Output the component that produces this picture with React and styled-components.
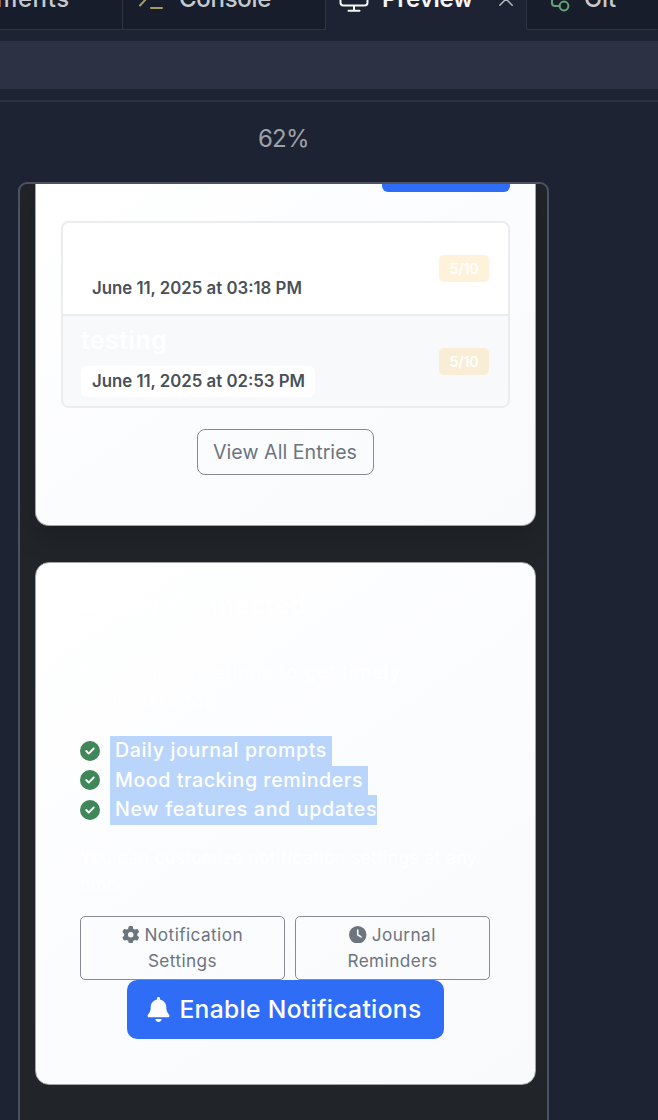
import React from "react";
import styled, { createGlobalStyle } from "styled-components";
import { FaBell, FaCircleCheck, FaClock, FaGear } from "react-icons/fa6";

const GlobalStyle = createGlobalStyle`
  * { box-sizing: border-box; }
  body {
    margin: 0;
    background: #1e2333;
    font-family: Inter, "Liberation Sans", sans-serif;
    -webkit-font-smoothing: antialiased;
  }
`;

const Page = styled.div`
  height: 1120px;
  overflow: hidden;
  display: flex;
  flex-direction: column;
`;

/* Editor chrome */
const TabBar = styled.div`
  flex: none;
  height: 62px;
  margin-top: -32px;
  display: flex;
`;

const Tab = styled.div`
  flex: none;
  width: ${(p) => p.$width};
  display: flex;
  align-items: center;
  padding-left: ${(p) => p.$inset}px;
  color: ${(p) => (p.$active ? "#f4f6f8" : "#c5cad0")};
  background: ${(p) => (p.$active ? "transparent" : "#181d2b")};
  border-bottom: 1px solid ${(p) => (p.$active ? "transparent" : "#2f3445")};
  border-right: 1px solid ${(p) => (p.$last ? "transparent" : "#2f3445")};
`;

const TabLabel = styled.span`
  font-size: 24px;
  line-height: 30px;
  font-weight: ${(p) => (p.$strong ? 600 : 500)};
  letter-spacing: ${(p) => p.$tracking}px;
  margin-left: ${(p) => p.$gap || 0}px;
  margin-top: 1px;
  white-space: nowrap;
`;

const TabIcon = styled.svg`
  flex: none;
  fill: none;
  stroke: ${(p) => p.$color};
  stroke-width: ${(p) => p.$weight || 2};
  stroke-linecap: round;
  stroke-linejoin: round;
  margin-left: ${(p) => p.$gap || 0}px;
`;

const AddressBar = styled.div`
  flex: none;
  height: 48px;
  margin: 11px 0;
  background: #2c3144;
`;

const ZoomRow = styled.div`
  flex: none;
  height: 82px;
  border-top: 2px solid #2c3142;
  padding: 22px 0 0 258px;
  font-size: 24px;
  line-height: 30px;
  letter-spacing: -0.8px;
  color: #9da1a8;
`;

/* Device frame */
const Device = styled.div`
  flex: none;
  width: 531px;
  height: 960px;
  margin-left: 18px;
  padding: 0 11px 0 15px;
  border: 2px solid #4c5164;
  border-radius: 9px;
  background: #212529;
  overflow: hidden;
`;

const Card = styled.section`
  display: flex;
  flex-direction: column;
  border: 1px solid #a2a4a7;
  border-radius: 14px;
  background: linear-gradient(145deg, #ffffff 0%, #fbfcfe 50%, #f9fafc 100%);
  color: #ffffff;
`;

const EntriesCard = styled(Card)`
  height: 342px;
  padding: 0 25px;
  border-top: 0;
  border-radius: 0 0 14px 14px;
  box-shadow: 0 10px 28px rgba(0, 0, 0, 0.2);
`;

const NotificationsCard = styled(Card)`
  height: 523px;
  margin-top: 36px;
  padding: 27px 45px 0 44px;
`;

const HeaderButton = styled.div`
  align-self: flex-end;
  width: 128px;
  height: 8px;
  border-radius: 0 0 6px 6px;
  background: #306df6;
`;

const EntryList = styled.div`
  margin: 29px 0 21px;
  border: 2px solid #eaecee;
  border-radius: 8px;
  overflow: hidden;
`;

const Entry = styled.article`
  display: flex;
  align-items: center;
  justify-content: space-between;
  height: ${(p) => (p.$shaded ? 92 : 91)}px;
  padding: 0 19px 0 18px;
  background: ${(p) => (p.$shaded ? "#f8f9fb" : "#ffffff")};

  & + & {
    border-top: 2px solid #eaecee;
  }
`;

const EntryBody = styled.div`
  display: flex;
  flex-direction: column;
  align-items: flex-start;
  gap: 10px;
`;

const EntryTitle = styled.h3`
  margin: 0;
  height: 30px;
  font-size: 24.6px;
  line-height: 29px;
  font-weight: 600;
  letter-spacing: 0.6px;
`;

const EntryDate = styled.time`
  padding: 0 10px 0 11px;
  border-radius: 6px;
  background: #ffffff;
  color: #495057;
  font-size: 16.8px;
  line-height: 31px;
  font-weight: 600;
`;

const Score = styled.span`
  width: 50px;
  border-radius: 5px;
  background: ${(p) => (p.$shaded ? "#f9edd5" : "#fef2da")};
  color: #ffffff;
  font-size: 14.3px;
  line-height: 27px;
  font-weight: 600;
  letter-spacing: -0.2px;
  text-align: center;
`;

const ViewAllButton = styled.button`
  align-self: center;
  width: 177px;
  height: 46px;
  padding: 0 1px 1px 0;
  border: 1.5px solid #868b93;
  border-radius: 8px;
  background: transparent;
  color: #6c757d;
  font: 400 19.6px Inter, sans-serif;
  letter-spacing: 0.04px;
`;

const Heading = styled.h2`
  display: flex;
  align-items: center;
  gap: 5px;
  margin: 0 0 37.5px;
  font-size: 25px;
  line-height: 30px;
  font-weight: 500;
  letter-spacing: 0.74px;
`;

const Lead = styled.p`
  margin: 0 0 19.500px;
  font-size: 19.6px;
  line-height: 29.5px;
  letter-spacing: 0.57px;
`;

const Features = styled.ul`
  margin: 0 0 20px;
  padding: 0;
  list-style: none;
`;

const Feature = styled.li`
  display: flex;
  align-items: center;
  gap: 10px;
  height: 29.5px;

  svg {
    flex: none;
    font-size: 20px;
    color: #3f8758;
  }
`;

const Selected = styled.span`
  padding-left: 5px;
  padding-right: ${(p) => (p.$last ? 0 : 5)}px;
  background: #b9d5fc;
  font-size: 19.6px;
  line-height: 29.5px;
  font-weight: 500;
  letter-spacing: ${(p) => p.$tracking}px;
`;

const Note = styled.p`
  margin: 0 0 19px;
  font-size: 17.2px;
  line-height: 26px;
  letter-spacing: 0.55px;
`;

const ButtonRow = styled.div`
  display: grid;
  grid-template-columns: 205px 195px;
  gap: 10px;
`;

const OutlineButton = styled.button`
  height: 64px;
  padding: 0 30px;
  border: 1.5px solid #868b93;
  border-radius: 5px;
  background: transparent;
  color: #6c757d;
  font: 400 17.2px/26px Inter, sans-serif;
  letter-spacing: 0.42px;

  svg {
    font-size: 17.5px;
    margin-right: 5px;
    vertical-align: -2.500px;
  }
`;

const EnableButton = styled.button`
  align-self: center;
  display: flex;
  align-items: center;
  justify-content: center;
  gap: 8px;
  width: 317px;
  height: 59.5px;
  padding: 0 2px 0 0;
  border: 0;
  border-radius: 10px;
  background: #306df6;
  color: #ffffff;
  font: 500 24.6px Inter, sans-serif;
  letter-spacing: 0.33px;
`;

const features = [
  { text: "Daily journal prompts", tracking: 0.62 },
  { text: "Mood tracking reminders", tracking: 0.56 },
  { text: "New features and updates", tracking: 0.67 },
];

export default function App() {
  return (
    <Page>
      <GlobalStyle />
      <TabBar>
        <Tab $width="123px" $inset={0}>
          <TabLabel $tracking={0.6} $gap={-4}>ments</TabLabel>
        </Tab>
        <Tab $width="203px" $inset={15}>
          <TabIcon $color="#a59a64" width="26" height="26" viewBox="0 0 26 26">
            <path d="M2 19.5 9 12 2 4.5M13 22h11" />
          </TabIcon>
          <TabLabel $tracking={-0.3} $gap={15}>Console</TabLabel>
        </Tab>
        <Tab $width="201px" $inset={13} $active>
          <TabIcon $color="#f4f6f8" width="30" height="30" viewBox="0 0 30 30">
            <path d="M4.500 2h21a3 3 0 0 1 3 3v13.500a3 3 0 0 1-3 3h-21a3 3 0 0 1-3-3V5a3 3 0 0 1 3-3ZM15 21.500v5M9.500 26.700h11" />
          </TabIcon>
          <TabLabel $tracking={-0.23} $gap={13} $strong>Preview</TabLabel>
          <TabIcon $color="#b4b8bf" $weight={1.5} $gap={26} width="14" height="14" viewBox="0 0 14 14">
            <path d="m.8.8 12.400 12.400M13.200.8.8 13.200" />
          </TabIcon>
        </Tab>
        <Tab $width="131px" $inset={22} $last>
          <TabIcon $color="#66a376" width="22" height="26" viewBox="0 0 22 26">
            <circle cx="4" cy="5" r="3" />
            <path d="M3 8v9a3 3 0 0 0 3 3h4.500" />
            <circle cx="15" cy="20" r="4.400" />
          </TabIcon>
          <TabLabel $tracking={0} $gap={13}>Git</TabLabel>
        </Tab>
      </TabBar>
      <AddressBar />
      <ZoomRow>62%</ZoomRow>

      <Device>
        <EntriesCard>
          <HeaderButton />
          <EntryList>
            <Entry>
              <EntryBody>
                <EntryTitle />
                <EntryDate>June 11, 2025 at 03:18 PM</EntryDate>
              </EntryBody>
              <Score>5/10</Score>
            </Entry>
            <Entry $shaded>
              <EntryBody>
                <EntryTitle>testing</EntryTitle>
                <EntryDate>June 11, 2025 at 02:53 PM</EntryDate>
              </EntryBody>
              <Score $shaded>5/10</Score>
            </Entry>
          </EntryList>
          <ViewAllButton>View All Entries</ViewAllButton>
        </EntriesCard>

        <NotificationsCard>
          <Heading><FaBell size={20} />Stay Connected</Heading>
          <Lead>
            Enable notifications to get timely
            <br />
            reminders for:
          </Lead>
          <Features>
            {features.map(({ text, tracking }, i) => (
              <Feature key={text}>
                <FaCircleCheck />
                <Selected $tracking={tracking} $last={i === features.length - 1}>{text}</Selected>
              </Feature>
            ))}
          </Features>
          <Note>
            You can customize notification settings at any
            <br />
            time.
          </Note>
          <ButtonRow>
            <OutlineButton><FaGear />Notification<br />Settings</OutlineButton>
            <OutlineButton><FaClock />Journal<br />Reminders</OutlineButton>
          </ButtonRow>
          <EnableButton><FaBell size={25} />Enable Notifications</EnableButton>
        </NotificationsCard>
      </Device>
    </Page>
  );
}
